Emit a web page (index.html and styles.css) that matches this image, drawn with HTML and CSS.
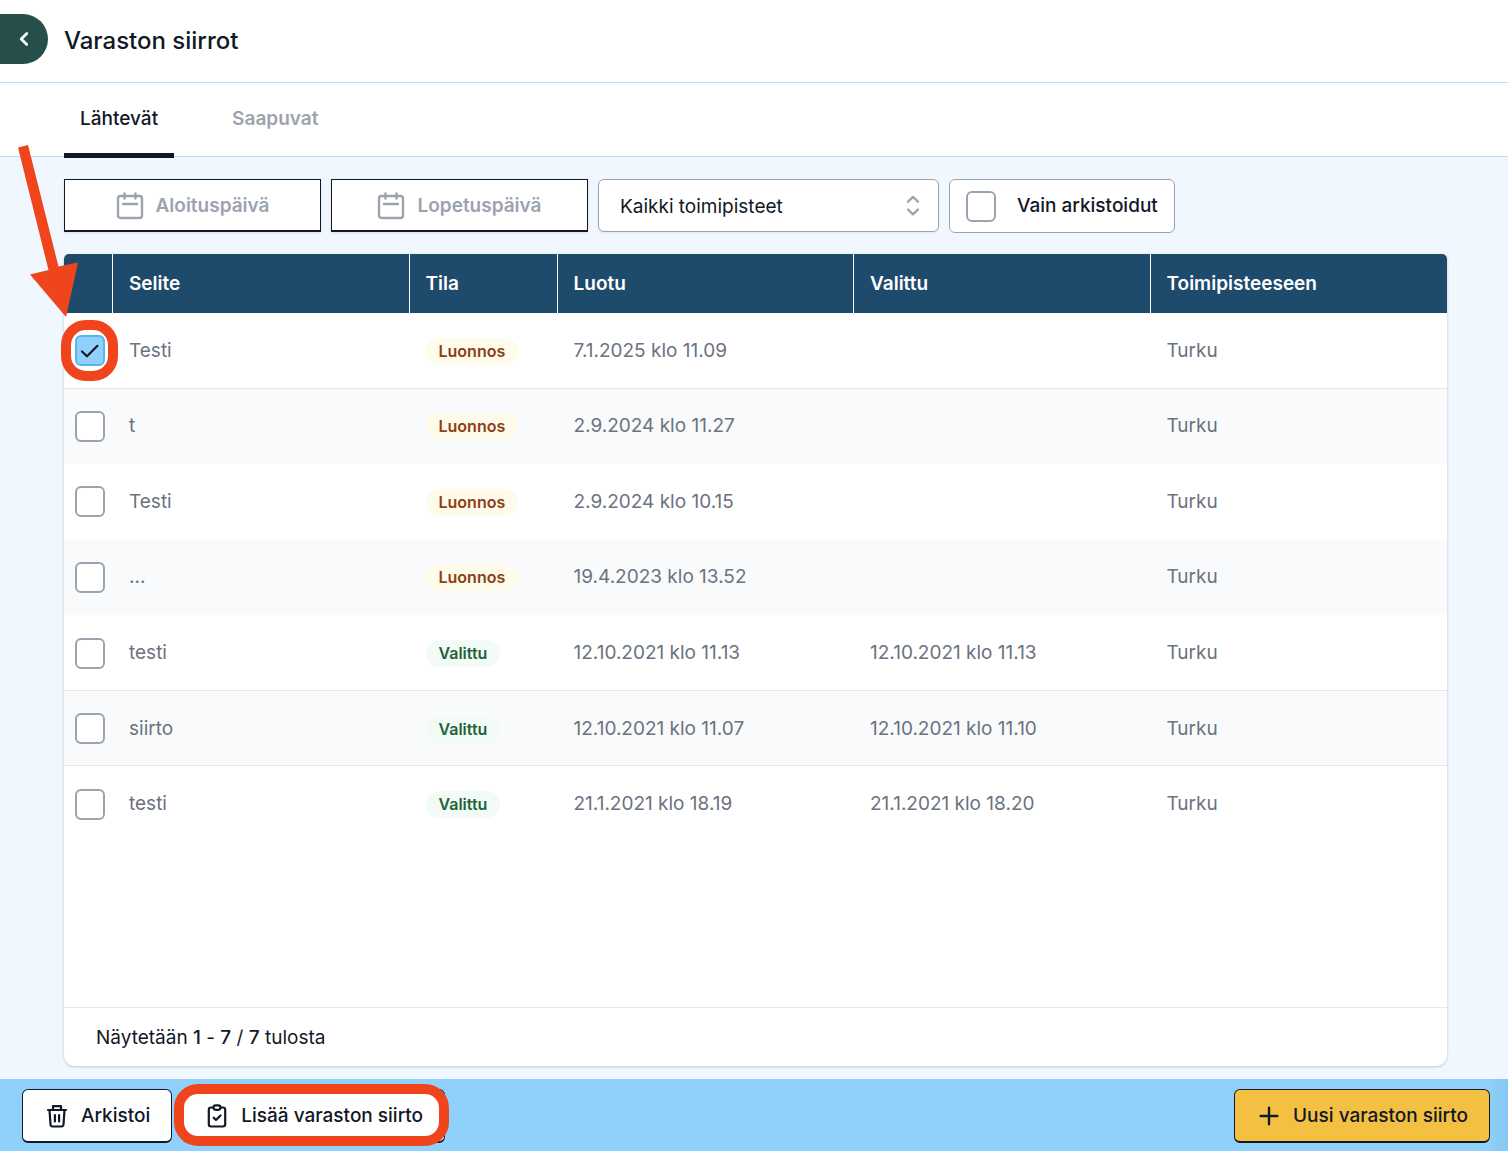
FILE: index.html
```html
<!DOCTYPE html>
<html lang="fi">
<head>
<meta charset="utf-8">
<meta name="viewport" content="width=device-width, initial-scale=1">
<title>Varaston siirrot</title>
<link rel="stylesheet" href="styles.css">
</head>
<body>
<header class="topbar">
  <button class="back" type="button" aria-label="Takaisin">
    <svg width="28" height="28" viewBox="0 0 20 20" fill="currentColor" aria-hidden="true"><path fill-rule="evenodd" d="M12.7 5.3a1 1 0 010 1.4L9.4 10l3.3 3.3a1 1 0 01-1.4 1.4l-4-4a1 1 0 010-1.4l4-4a1 1 0 011.4 0z"/></svg>
  </button>
  <h1 class="title">Varaston siirrot</h1>
</header>
<nav class="tabs">
  <a class="tab tab-active" href="#lahtevat">Lähtevät</a>
  <a class="tab" href="#saapuvat">Saapuvat</a>
</nav>
<main class="content">
  <div class="filters">
    <button class="date" type="button">
      <svg width="28" height="28" viewBox="0 0 28 28" fill="none" stroke="currentColor" stroke-width="2.4" stroke-linecap="round" aria-hidden="true"><rect x="2" y="4" width="24" height="22" rx="2.5"/><path d="M8.500 1.500v5M19.500 1.500v5M7 12h14"/></svg>
      Aloituspäivä
    </button>
    <button class="date" type="button">
      <svg width="28" height="28" viewBox="0 0 28 28" fill="none" stroke="currentColor" stroke-width="2.4" stroke-linecap="round" aria-hidden="true"><rect x="2" y="4" width="24" height="22" rx="2.5"/><path d="M8.500 1.500v5M19.500 1.500v5M7 12h14"/></svg>
      Lopetuspäivä
    </button>
    <div class="select-wrap">
      <select class="select" aria-label="Toimipiste"><option>Kaikki toimipisteet</option></select>
      <svg class="select-arrows" width="26" height="26" viewBox="0 0 20 20" fill="none" stroke="currentColor" stroke-width="1.8" stroke-linecap="round" stroke-linejoin="round" aria-hidden="true"><path d="M6.200 6.700L10 3 13.800 6.700M6.200 12.700L10 16.400 13.800 12.700"/></svg>
    </div>
    <label class="archived"><input class="check" type="checkbox">Vain arkistoidut</label>
  </div>
  <section class="card">
    <table class="transfers">
      <colgroup><col class="col-check"><col><col class="col-state"><col><col><col></colgroup>
      <thead>
        <tr><th></th><th>Selite</th><th>Tila</th><th>Luotu</th><th>Valittu</th><th>Toimipisteeseen</th></tr>
      </thead>
      <tbody>
        <tr class="ruled"><td><span class="marked"><input class="check" type="checkbox" aria-label="Valitse Testi" checked><svg class="tick" width="20" height="14" viewBox="0 0 20 14" fill="none" stroke="currentColor" stroke-width="2.2" stroke-linecap="round" stroke-linejoin="round" aria-hidden="true"><path d="M2 7.500L7 12.300 17.500 1.800"/></svg></span></td><td>Testi</td><td><span class="badge draft">Luonnos</span></td><td>7.1.2025 klo 11.09</td><td></td><td>Turku</td></tr>
        <tr><td><input class="check" type="checkbox" aria-label="Valitse t"></td><td>t</td><td><span class="badge draft">Luonnos</span></td><td>2.9.2024 klo 11.27</td><td></td><td>Turku</td></tr>
        <tr><td><input class="check" type="checkbox" aria-label="Valitse Testi"></td><td>Testi</td><td><span class="badge draft">Luonnos</span></td><td>2.9.2024 klo 10.15</td><td></td><td>Turku</td></tr>
        <tr><td><input class="check" type="checkbox" aria-label="Valitse ..."></td><td>...</td><td><span class="badge draft">Luonnos</span></td><td>19.4.2023 klo 13.52</td><td></td><td>Turku</td></tr>
        <tr class="ruled"><td><input class="check" type="checkbox" aria-label="Valitse testi"></td><td>testi</td><td><span class="badge chosen">Valittu</span></td><td>12.10.2021 klo 11.13</td><td>12.10.2021 klo 11.13</td><td>Turku</td></tr>
        <tr class="ruled"><td><input class="check" type="checkbox" aria-label="Valitse siirto"></td><td>siirto</td><td><span class="badge chosen">Valittu</span></td><td>12.10.2021 klo 11.07</td><td>12.10.2021 klo 11.10</td><td>Turku</td></tr>
        <tr><td><input class="check" type="checkbox" aria-label="Valitse testi"></td><td>testi</td><td><span class="badge chosen">Valittu</span></td><td>21.1.2021 klo 18.19</td><td>21.1.2021 klo 18.20</td><td>Turku</td></tr>
      </tbody>
    </table>
    <p class="summary">Näytetään <b>1</b> - <b>7</b> / <b>7</b> tulosta</p>
  </section>
</main>
<footer class="actions">
  <button class="action" type="button">
    <svg width="26" height="26" viewBox="0 0 26 26" fill="none" stroke="currentColor" stroke-width="2.2" stroke-linecap="round" stroke-linejoin="round" aria-hidden="true"><path d="M4 7h18M9 7V3.200h8V7M5.500 7l1 14.500q.2 2 2 2h9q1.800 0 2-2L20.500 7M10.900 12v6.500M15.100 12v6.500"/></svg>
    Arkistoi
  </button>
  <div class="highlight">
    <button class="action" type="button">
      <svg width="26" height="26" viewBox="0 0 26 26" fill="none" stroke="currentColor" stroke-width="2.2" stroke-linecap="round" stroke-linejoin="round" aria-hidden="true"><path d="M9 4.500H7Q4.800 4.500 4.800 6.700V21.300Q4.800 23.500 7 23.500H19Q21.200 23.500 21.200 21.300V6.700Q21.200 4.500 19 4.500H17"/><rect x="9.500" y="2.300" width="7" height="4.500" rx="2.200"/><path d="M9.700 14.700l2.300 2.300 4.500-4.500"/></svg>
      Lisää varaston siirto
    </button>
  </div>
  <button class="action action-new" type="button">
    <svg width="26" height="26" viewBox="0 0 26 26" fill="none" stroke="currentColor" stroke-width="2.4" stroke-linecap="round" aria-hidden="true"><path d="M13 4.700v16.600M4.700 13h16.600"/></svg>
    Uusi varaston siirto
  </button>
</footer>
<svg class="pointer" width="80" height="180" viewBox="0 0 80 180" fill="#f0451c" aria-hidden="true"><path d="M18 7.500L28 5 58.500 126.500 78 122.500 66 177 30 134.500 48.500 130z"/></svg>
</body>
</html>
```
FILE: styles.css
```css
* { box-sizing: border-box; }

body {
  position: relative;
  display: flex;
  flex-direction: column;
  min-height: 100vh;
  margin: 0;
  background: #f0f7ff;
  color: #111827;
  font: 400 19px/28px Inter, "Liberation Sans", sans-serif;
}

button, select { font: inherit; color: inherit; }

.topbar {
  display: flex;
  align-items: center;
  gap: 16px;
  height: 83px;
  padding-bottom: 4px;
  background: #fff;
  border-bottom: 1px solid #bfdbfe;
}

.back {
  display: grid;
  place-items: center;
  width: 48px;
  height: 50px;
  padding: 0;
  border: 0;
  border-radius: 0 25px 25px 0;
  background: #264e4b;
  color: #fff;
}

.title { margin: 0; padding-top: 4px; font-size: 24px; font-weight: 500; line-height: 32px; }

.tabs {
  display: flex;
  gap: 42px;
  height: 74px;
  padding-left: 64px;
  background: #fff;
  border-bottom: 1px solid #bfdbfe;
}

.tab {
  height: 75px;
  padding: 22px 16px 0;
  border-bottom: 5px solid transparent;
  color: #9ca3af;
  font-weight: 600;
  text-decoration: none;
}

.tab-active { border-color: #111827; color: #111827; font-weight: 500; }

.content {
  display: flex;
  flex: 1;
  flex-direction: column;
  gap: 21px;
  padding: 22px 61px 13px 64px;
}

.filters { display: flex; gap: 10px; }

.date {
  display: flex;
  align-items: center;
  justify-content: center;
  gap: 12px;
  width: 257px;
  height: 53px;
  padding: 2px 0 0;
  background: #fff;
  border: 1px solid #111827;
  border-bottom-width: 2px;
  color: #9ca3af;
  font-weight: 600;
  box-shadow: 0 1px 3px rgba(0, 0, 0, .1);
}

.select-wrap { display: grid; align-items: center; width: 341px; height: 53px; }

.select, .select-arrows { grid-area: 1 / 1; }

.select {
  width: 100%;
  height: 53px;
  padding: 2px 48px 0 21px;
  appearance: none;
  background: #fff;
  border: 1px solid #9ca3af;
  border-radius: 6px;
  box-shadow: 0 1px 2px rgba(0, 0, 0, .08);
}

.select-arrows {
  justify-self: end;
  margin-right: 13px;
  color: #9ca3af;
  pointer-events: none;
}

.archived {
  display: flex;
  align-items: center;
  gap: 21px;
  height: 54px;
  padding: 0 16px;
  background: #fff;
  border: 1px solid #9ca3af;
  border-radius: 6px;
  font-weight: 500;
}

.check {
  display: block;
  flex: none;
  width: 30px;
  height: 31px;
  margin: 0;
  appearance: none;
  background: #fff;
  border: 2px solid #9ca3af;
  border-radius: 6px;
}

.check:checked { background: #8fd1fa; border-color: #56b5f2; }

.card {
  display: flex;
  flex: 1;
  flex-direction: column;
  justify-content: space-between;
  background: #fff;
  border-radius: 5px 5px 11px 11px;
  box-shadow: 0 1px 3px rgba(0, 0, 0, .2);
}

.transfers {
  width: 100%;
  height: 588px;
  table-layout: fixed;
  border-spacing: 0;
  color: #6b7280;
}

.col-check { width: 49px; }
.col-state { width: 148px; }

th {
  height: 59px;
  padding: 0 16px;
  background: #1e4a6b;
  border-right: 1px solid #fff;
  color: #fff;
  font-weight: 600;
  text-align: left;
}

th:first-child { border-top-left-radius: 5px; }
th:last-child { border-right: 0; border-top-right-radius: 5px; }

td { padding: 0 16px; }
td:first-child { padding: 0 0 0 11px; }
tbody tr:nth-child(even) { background: #f9fafb; }
.ruled td { box-shadow: inset 0 -1px #e5e7eb; }

.badge {
  display: inline-block;
  padding: 0 13px;
  border-radius: 14px;
  font-size: 16px;
  font-weight: 600;
  line-height: 27px;
}

.draft { background: #fffbeb; color: #8a4117; }
.chosen { background: #f2fbf5; color: #23623a; }

.marked { position: relative; display: grid; width: 30px; place-items: center; color: #111827; }
.marked .check, .tick { grid-area: 1 / 1; }
.tick { z-index: 1; pointer-events: none; }

.marked::after {
  content: "";
  position: absolute;
  inset: -15px -13px -15px -14px;
  border: 10px solid #f0451c;
  border-radius: 25px;
  pointer-events: none;
}

.summary {
  margin: 0;
  padding: 16px 32px 14px;
  border-top: 1px solid #e5e7eb;
}

.summary b { font-weight: 500; }

.actions {
  display: flex;
  align-items: center;
  gap: 10px;
  height: 72px;
  padding: 2px 18px 0 22px;
  background: linear-gradient(to left, #88c8f4, #8fd1fa 24px);
}

.action {
  display: flex;
  align-items: center;
  gap: 11px;
  height: 54px;
  padding: 0 21px;
  background: #fff;
  border: 1px solid #111827;
  border-bottom-width: 2px;
  border-radius: 6px;
  font-weight: 500;
}

.action-new { margin-left: auto; background: #f4c042; }

.highlight { position: relative; }

.highlight::after {
  content: "";
  position: absolute;
  inset: -5px -4px -3px -8px;
  border: 10px solid #f0451c;
  border-radius: 24px;
  pointer-events: none;
}

.pointer { position: absolute; top: 140px; left: 0; pointer-events: none; }
```
